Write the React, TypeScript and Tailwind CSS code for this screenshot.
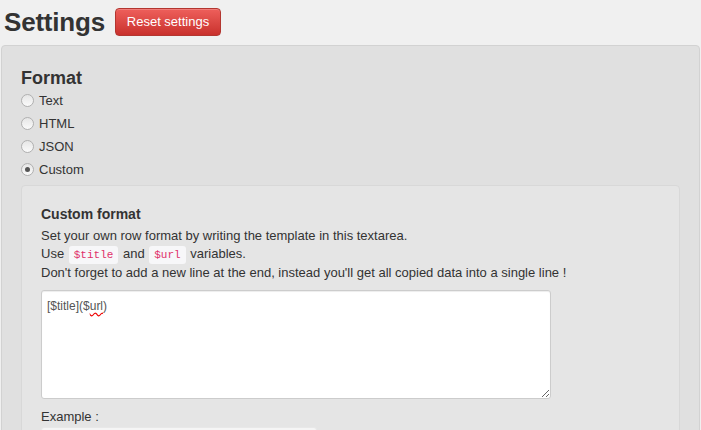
import React from 'react';

const Radio = ({ label, checked = false }: { label: string; checked?: boolean }) => (
  <label className="flex items-center h-[23px] gap-[5px]">
    <span className="w-[13px] h-[13px] rounded-full border border-[#b0b0b0] bg-gradient-to-b from-[#e6e6e6] to-[#fafafa] flex items-center justify-center">
      {checked && <span className="w-[5px] h-[5px] rounded-full bg-[#555]" />}
    </span>
    <span>{label}</span>
  </label>
);

const Code = ({ children }: { children: React.ReactNode }) => (
  <code className="inline-block px-[5px] leading-[18px] mx-[1px] rounded-[3px] bg-[#f7f7f9] text-[#e0306a] text-[11px] font-['Liberation_Mono',monospace]">
    {children}
  </code>
);

export default function App() {
  return (
    <div className="h-[430px] overflow-hidden bg-[#f0f0f0] text-[#333] text-[13px] font-['Liberation_Sans',Arial,sans-serif]">
      <div className="flex items-start gap-[10px] pl-[4px] pt-[8px] h-[45px]">
        <h1 className="text-[26px] leading-[28px] font-bold text-[#333] tracking-[-0.2px]">Settings</h1>
        <button className="h-[28px] w-[106px] rounded-[4px] border border-[#b33630] bg-gradient-to-b from-[#ee5f5b] to-[#c9302c] text-white text-[13px] shadow-[inset_0_1px_0_rgba(255,255,255,0.2)]">
          Reset settings
        </button>
      </div>

      <div className="mx-[1px] rounded-t-[4px] border border-[#d2d2d2] bg-[#e0e0e0] pl-[19px] pr-[19px] pt-[21px] h-[400px]">
        <h2 className="text-[18px] leading-[22px] font-bold text-[#333]">Format</h2>
        <div>
          <Radio label="Text" />
          <Radio label="HTML" />
          <Radio label="JSON" />
          <Radio label="Custom" checked />
        </div>

        <div className="mt-[4px] rounded-[4px] border border-[#d8d8d8] bg-[#e5e5e5] pl-[19px] pr-[19px] pt-[19px] pb-[20px]">
          <h3 className="text-[14px] leading-[18px] font-bold text-[#333]">Custom format</h3>
          <div className="leading-[18px] mt-[4px]">
            <p>Set your own row format by writing the template in this textarea.</p>
            <p>
              Use <Code>$title</Code> and <Code>$url</Code> variables.
            </p>
            <p>Don't forget to add a new line at the end, instead you'll get all copied data into a single line !</p>
          </div>
          <div className="mt-[8px] w-[510px] h-[109px] rounded-[3px] border border-[#cccccc] bg-white shadow-[inset_0_1px_1px_rgba(0,0,0,0.075)] resize overflow-hidden">
            <div className="px-[5px] pt-[6px] text-[12px] leading-[18px] text-[#555]">
              [$title](<span>$</span><span className="underline decoration-wavy decoration-[#e00] underline-offset-[2px]">url</span>)
            </div>
          </div>
          <p className="mt-[9px] text-[13px] leading-[18px]">Example :</p>
          <div className="mt-[1px] w-[276px] h-[30px] rounded-[3px] bg-[#f5f5f5] border border-[#e8e8e8]" />
        </div>
      </div>
    </div>
  );
}
